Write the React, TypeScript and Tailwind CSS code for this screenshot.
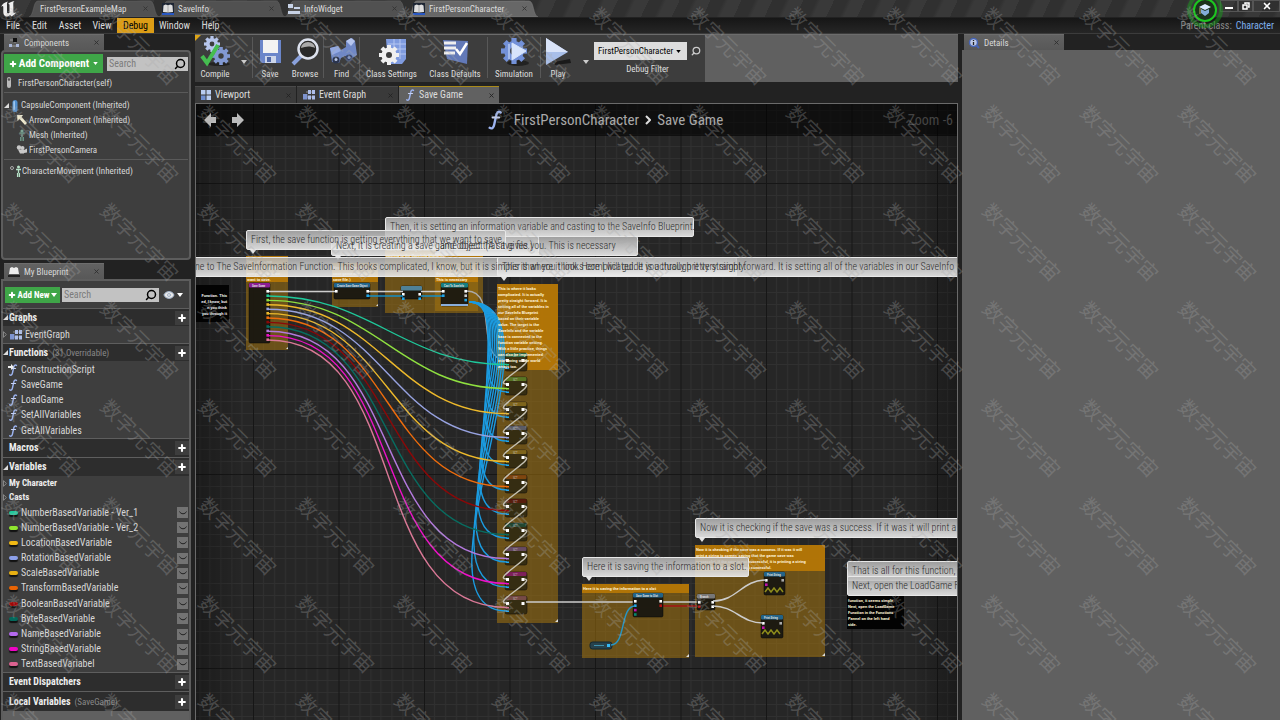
import type { ReactNode } from 'react';
import { Eye, Plus, Search, X } from 'lucide-react';

const watermarks = Array.from({ length: 104 }, (_, i) => i);

const variables = [
  { name: 'NumberBasedVariable - Ver_1', dot: 'bg-[#1fc99b]', color: '#1fc99b' },
  { name: 'NumberBasedVariable - Ver_2', dot: 'bg-[#8fe52f]', color: '#8fe040' },
  { name: 'LocationBasedVariable', dot: 'bg-[#f0b915]', color: '#edb92b' },
  { name: 'RotationBasedVariable', dot: 'bg-[#8c9fe8]', color: '#97a2e0' },
  { name: 'ScaleBasedVariable', dot: 'bg-[#e8b013]', color: '#edb92b' },
  { name: 'TransformBasedVariable', dot: 'bg-[#e86404]', color: '#ee6c0c' },
  { name: 'BooleanBasedVariable', dot: 'bg-[#a00808]', color: '#8b0808' },
  { name: 'ByteBasedVariable', dot: 'bg-[#04695c]', color: '#086c60' },
  { name: 'NameBasedVariable', dot: 'bg-[#b469ee]', color: '#b379dd' },
  { name: 'StringBasedVariable', dot: 'bg-[#ee04c4]', color: '#ee10c8' },
  { name: 'TextBasedVariabel', dot: 'bg-[#dc6290]', color: '#d97896' },
];

const gearTeeth = [0, 45, 90, 135, 180, 225, 270, 315];

function Gear({ cx, cy, r, fill }: { cx: number; cy: number; r: number; fill: string }) {
  return (
    <g transform={`translate(${cx} ${cy})`}>
      {gearTeeth.map((a) => (
        <rect key={a} x={-r * 0.2} y={-r} width={r * 0.4} height={r} fill={fill} transform={`rotate(${a})`} />
      ))}
      <circle r={r * 0.52} fill="none" stroke={fill} strokeWidth={r * 0.48} />
      <circle r={r * 0.3} fill="#3d3d3d" />
    </g>
  );
}

function FunctionIcon({ className }: { className: string }) {
  return (
    <svg viewBox="0 0 10 14" className={className} fill="none" strokeLinecap="round">
      <path d="M9 1.6C7.4.4 6.2 1.8 5.8 4L4.4 10.4C4 12.6 2.8 13.6 1.2 12.6" stroke="#9db4f0" strokeWidth="1.7" />
      <path d="M3.2 5.2H8" stroke="#c7d3f7" strokeWidth="1.3" />
    </svg>
  );
}

function GraphIcon() {
  return (
    <svg viewBox="0 0 12 10" className="h-2.5 w-3 shrink-0">
      <path d="M3 2h6M4 7h5" stroke="#888" />
      <path d="M5 0h3v4H5zM9 0h3v4H9zM5 5.5h3v4H5zM9 5.5h3v4H9z" fill="#aebfea" />
      <path d="M0 4h4.4v5.500H0z" fill="#7e94d0" />
    </svg>
  );
}

function BookIcon() {
  return (
    <svg viewBox="0 0 12 12" className="h-3 w-3 shrink-0">
      <path d="M0 0h12v12H0z" fill="#1d2533" />
      <path d="M0 10h12v2H0z" fill="#2757c4" />
      <path d="M1.500 2.500L3.500 1.500 6 2.300 8.500 1.500 10.500 2.500 11 9 6 9.400 1 9z" fill="#dedede" />
      <path d="M6 2v7.400" stroke="#8b8b8b" strokeWidth=".6" />
    </svg>
  );
}

function Caret({ className }: { className: string }) {
  return (
    <svg viewBox="0 0 6 4" className={className} fill="currentColor">
      <path d="M0 0h6L3 4z" />
    </svg>
  );
}

function OpenCorner() {
  return (
    <svg viewBox="0 0 5 5" className="h-[5px] w-[5px] shrink-0" fill="#ddd">
      <path d="M5 0v5H0z" />
    </svg>
  );
}

function ClosedArrow() {
  return (
    <svg viewBox="0 0 4 7" className="h-[7px] w-1 shrink-0" fill="none" stroke="#999" strokeWidth=".8">
      <path d="M.5.7L3.400 3.500.5 6.300z" />
    </svg>
  );
}

function AssetTab({ label, icon, active, className }: { label: string; icon?: ReactNode; active?: boolean; className: string }) {
  return (
    <div className={`relative flex h-[17px] items-center text-[9px] ${className}`}>
      <svg viewBox="0 0 130 17" preserveAspectRatio="none" className="absolute inset-0 h-full w-full">
        <path d="M0 17C5 16 4 1 9 1H121C126 1 125 16 130 17z" fill={active ? '#676767' : '#515151'} stroke={active ? '#808080' : '#636363'} strokeWidth=".6" />
      </svg>
      <button className="relative flex h-full min-w-0 flex-1 items-center gap-1 whitespace-nowrap text-left">
        {icon}
        {label}
      </button>
      <X className="relative mr-2.5 h-[7px] w-[7px] text-[#333]" strokeWidth={3} />
    </div>
  );
}

function PanelTab({ label, icon, className }: { label: string; icon: ReactNode; className: string }) {
  return (
    <div className={`flex h-4 items-center gap-1 border-t border-[#6d6d6d] bg-gradient-to-b from-[#626262] to-[#585858] pl-1 text-[9px] ${className}`}>
      {icon}
      <span className="flex-1 text-[#d8d8d8]">{label}</span>
      <X className="mr-1 h-[7px] w-[7px] text-[#2e2e2e]" strokeWidth={3} />
    </div>
  );
}

function SearchBox({ id }: { id: string }) {
  return (
    <div className="flex h-3.5 min-w-0 flex-1 items-center bg-[#c2c2c2] px-0.5">
      <label htmlFor={id} className="sr-only">Search</label>
      <input id={id} placeholder="Search" className="min-w-0 flex-1 bg-transparent text-black outline-none placeholder:text-[#7b7b7b]" />
      <Search className="h-3 w-3 -scale-x-100 text-black" strokeWidth={3} />
    </div>
  );
}

function SectionHeader({ label, note, open, className }: { label: string; note?: string; open?: boolean; className: string }) {
  return (
    <div className={`flex items-center border-t border-[#5e5e5e] bg-[#2d2d2d] ${className}`}>
      <span className="flex w-[6px] items-center">{open && <OpenCorner />}</span>
      <span className="font-bold text-[#eee]">{label}</span>
      {note && <span className="ml-1 text-[9px] text-[#888]">{note}</span>}
      <button aria-label={`Add to ${label}`} className="ml-auto flex h-3.5 w-3.5 items-center justify-center bg-[#3d3d3d] text-white">
        <Plus className="h-2.5 w-2.5" strokeWidth={5} />
      </button>
    </div>
  );
}

function ComponentsPanel() {
  return (
    <section className="flex flex-col">
      <PanelTab
        label="Components"
        className="ml-[3px] w-[100px]"
        icon={
          <svg viewBox="0 0 12 10" className="h-2.5 w-3">
            <path d="M2 2h5v3M4 8h6" stroke="#999" fill="none" />
            <path d="M5 0h4v4H5z" fill="#111" /><path d="M1 6h3v3H1zM8 6h3v3H8z" fill="#a9b6d8" />
          </svg>
        }
      />
      <div className="flex h-[210px] flex-col rounded-sm border-2 border-[#5d5d5d] bg-[#3e3e3e] px-px pt-0.5">
        <div className="flex items-center gap-1">
          <button className="flex h-[19px] w-[99px] items-center justify-center gap-0.5 bg-[#3fa648] text-[11px] font-bold whitespace-nowrap text-white">
            <Plus className="h-2 w-2" strokeWidth={6} />
            Add Component
            <Caret className="ml-0.5 h-[3px] w-[5px]" />
          </button>
          <SearchBox id="component-search" />
        </div>
        <ul className="mt-0.5 text-[9px] text-[#d8d8d8]">
          <li className="flex h-[15px] items-center gap-1.5 pl-0.5">
            <svg viewBox="0 0 6 12" className="h-3 w-1.5"><rect x="1" y="0" width="4" height="11" rx="2" fill="#bbb" /><circle cx="3" cy="2.500" r="1.300" fill="#555" /></svg>
            FirstPersonCharacter(self)
          </li>
          <li className="mt-0.5 flex h-5 items-end gap-[3px] border-t border-[#5a5a5a]">
            <span className="flex h-3.5 items-center"><OpenCorner /></span>
            <svg viewBox="0 0 6 12" className="h-3 w-1.5"><rect x=".5" y="0" width="5" height="12" rx="2.500" fill="#4f8fd0" /><rect x="1.400" y="1" width="1.500" height="9" rx=".8" fill="#a7cdf2" /></svg>
            CapsuleComponent (Inherited)
          </li>
          <li className="flex h-[15px] items-center gap-0.5 pl-3">
            <svg viewBox="0 0 11 10" className="h-2.5 w-[11px]"><path d="M1 0h6L5.500 2 11 8 9 10 3.500 4 1.500 6z" fill="#eee9cf" /></svg>
            ArrowComponent (Inherited)
          </li>
          <li className="flex h-[15px] items-center gap-0.5 pl-3">
            <svg viewBox="0 0 11 12" className="h-3 w-[11px]"><circle cx="6" cy="2" r="1.600" fill="#7da594" /><path d="M3.500 4h5M6 4v4M4.800 8v4M7.200 8v4" stroke="#6d9484" strokeWidth="1.500" /></svg>
            Mesh (Inherited)
          </li>
          <li className="flex h-[15px] items-center gap-0.5 pl-3">
            <svg viewBox="0 0 11 10" className="h-2.5 w-[11px]" fill="#c9c9c9"><circle cx="3" cy="2.500" r="2.200" /><circle cx="6.500" cy="3" r="2" /><path d="M2 4.500h6v4H4zM8 5l3-1.500v4L8 8z" /></svg>
            FirstPersonCamera
          </li>
          <li className="mt-0.5 flex h-[22px] items-center border-t border-[#5a5a5a] pl-1.5">
            <svg viewBox="0 0 12 12" className="h-3 w-3"><circle cx="2" cy="3" r="1.500" fill="none" stroke="#aaa" /><circle cx="8.500" cy="2" r="1.500" fill="#b5e0c6" /><path d="M6 4.500h5M8.500 4v4M7.600 8v4M9.400 8v4" stroke="#b5e0c6" strokeWidth="1.300" /></svg>
            CharacterMovement (Inherited)
          </li>
        </ul>
      </div>
    </section>
  );
}

function BlueprintPanel() {
  return (
    <section className="mt-[3px] flex min-h-0 flex-1 flex-col">
      <PanelTab
        label="My Blueprint"
        className="ml-[3px] w-[100px]"
        icon={<svg viewBox="0 0 12 10" className="h-2.5 w-3"><path d="M2 1L4 0 6 1 8 0l2 1 1 6H1z" fill="#eee" /><path d="M0 8h12v2H0z" fill="#222" /></svg>}
      />
      <div className="flex min-h-0 flex-1 flex-col border-2 border-b-0 border-[#5d5d5d] bg-[#606060]">
        <div className="flex h-[27px] items-center gap-0.5 bg-[#3e3e3e] px-0.5">
          <button className="flex h-4 w-[55px] items-center justify-center gap-0.5 bg-[#3fa648] text-[9px] font-bold whitespace-nowrap text-white">
            <Plus className="h-2 w-2" strokeWidth={6} />
            Add New
            <Caret className="h-1 w-1.5" />
          </button>
          <SearchBox id="blueprint-search" />
          <button aria-label="View options" className="ml-0.5 flex items-center gap-0.5 pr-1 text-white">
            <Eye className="h-3 w-3" fill="#e8e8e8" stroke="#9fb0c8" />
            <Caret className="h-1 w-1.5" />
          </button>
        </div>
        <SectionHeader label="Graphs" open className="h-[18px]" />
        <div className="flex h-[17px] items-center gap-[3px] bg-[#3e3e3e] text-[#d8d8d8]"><ClosedArrow /><GraphIcon />EventGraph</div>
        <SectionHeader label="Functions" note="(31 Overridable)" open className="h-[18px]" />
        <ul className="flex h-[77px] flex-col justify-between bg-[#3e3e3e] pt-px text-[#d8d8d8]">
          {['ConstructionScript', 'SaveGame', 'LoadGame', 'SetAllVariables', 'GetAllVariables'].map((name, i) => (
            <li key={name} className="flex h-[15px] items-center gap-[3px] pl-[5px]">
              <span className="relative flex w-2.5 justify-center">
                {i === 0 && <svg viewBox="0 0 6 6" className="absolute top-0 left-0 h-1.5 w-1.5"><path d="M0 2h3V0l3 3-3 3V4H0z" fill="#eee" /></svg>}
                <FunctionIcon className="h-3 w-2.5" />
              </span>
              {name}
            </li>
          ))}
        </ul>
        <SectionHeader label="Macros" className="h-[19px]" />
        <SectionHeader label="Variables" open className="h-[19px]" />
        <div className="flex h-[29px] flex-col bg-[#3e3e3e] text-[9px] font-bold text-[#eee]">
          <span className="flex h-[14px] items-center gap-0.5"><ClosedArrow />My Character</span>
          <span className="flex h-[14px] items-center gap-0.5"><ClosedArrow />Casts</span>
        </div>
        <ul className="flex h-[167px] flex-col justify-between bg-[#3e3e3e] text-[#d8d8d8]">
          {variables.map((v) => (
            <li key={v.name} className="flex h-[15px] items-center pr-px pl-[6px]">
              <span className={`mr-[3px] h-1 w-[9px] rounded-full shadow-[0_2px_1px_#111] ${v.dot}`} />
              {v.name}
              <button aria-label={`Toggle visibility of ${v.name}`} className="ml-auto flex h-[11px] w-[11px] items-center justify-center bg-[#737373]">
                <svg viewBox="0 0 8 4" className="h-1 w-2" fill="none" stroke="#222"><path d="M.5.5C2 3.500 6 3.500 7.500.5" /></svg>
              </button>
            </li>
          ))}
        </ul>
        <SectionHeader label="Event Dispatchers" className="h-[19px]" />
        <SectionHeader label="Local Variables" note="(SaveGame)" className="h-[20px]" />
      </div>
    </section>
  );
}

function ToolButton({ label, width, children }: { label: string; width: string; children: ReactNode }) {
  return (
    <button className={`flex h-full flex-col items-center justify-end whitespace-nowrap text-[9px] text-[#ddd] ${width}`}>
      <svg viewBox="0 0 32 32" className="h-8 w-8">{children}</svg>
      <span className="leading-3">{label}</span>
    </button>
  );
}

function Divider() {
  return <span className="h-[41px] w-px shrink-0 bg-[#585858]" />;
}

function Toolbar() {
  return (
    <div className="flex h-[48px] border-t border-[#6c6c6c] bg-[#606060]">
      <div className="relative flex items-center bg-[#3d3d3d] pb-0.5">
        <svg viewBox="0 0 6 6" className="absolute top-0 left-0 h-1.5 w-1.5"><path d="M0 0h6L0 6z" fill="#dca416" /></svg>
        <ToolButton label="Compile" width="w-[40px]">
          <ellipse cx="20" cy="28" rx="11" ry="2" fill="#222" />
          <Gear cx={13} cy={8} r={8} fill="#b7c6ec" />
          <Gear cx={22} cy={20} r={9} fill="#8299d3" />
          <path d="M3 20l5 7L19 9" fill="none" stroke="#45bd50" strokeWidth="4" />
        </ToolButton>
        <button aria-label="Compile options" className="flex w-[17px] justify-center pt-2 text-[#ccc]"><Caret className="h-1 w-1.5" /></button>
        <Divider />
        <ToolButton label="Save" width="w-[34px]">
          <path d="M6 4h21v23H8l-2-2z" fill="#6b86ca" />
          <path d="M9 4h15v13H9z" fill="#f2f2f2" />
          <path d="M11 20h11v7H11z" fill="#cdd6ea" /><path d="M13 21h4v5h-4z" fill="#5068a8" />
        </ToolButton>
        <ToolButton label="Browse" width="w-[36px]">
          <path d="M13 19L4 28" stroke="#8aa1dc" strokeWidth="4" />
          <circle cx="19" cy="13" r="9.500" fill="#292929" stroke="#dde2ee" strokeWidth="2.500" />
          <path d="M12 12a7 6 0 0 1 14 0c-4-2-9-2-14 0z" fill="#aaa" />
        </ToolButton>
        <Divider />
        <ToolButton label="Find" width="w-[35px]">
          <path d="M4 12l8-2 3 4 5-3 0-6 6-3 3 3 2 14-6 4-6-3-4 2-2 5-7-1z" fill="#7088c6" />
          <path d="M20 5l5-3 4 3-4 5z" fill="#b6c5ee" /><path d="M4 12l8-2 3 5-9 4z" fill="#93a9e2" />
          <circle cx="10" cy="24" r="3.500" fill="#2a344e" /><circle cx="23" cy="22" r="3.500" fill="#34436b" />
          <circle cx="10" cy="23.500" r="1.500" fill="#b9c5e0" /><circle cx="23" cy="21.500" r="1.500" fill="#8496c4" />
        </ToolButton>
        <Divider />
        <ToolButton label="Class Settings" width="w-[63px]">
          <path d="M10 3h20v20l-4 5H12z" fill="#7f9bdf" />
          <path d="M12 8h18M12 13h18M12 18h18M18 3v20M24 3v20" stroke="#b5c6f1" />
          <Gear cx={13} cy={19} r={10} fill="#f0f0f0" />
        </ToolButton>
        <ToolButton label="Class Defaults" width="w-[64px]">
          <path d="M4 4l25 1-1 23L8 23z" fill="#6279b8" />
          <path d="M5 7h12M5 12h12M5 17h11" stroke="#eee" strokeWidth="3" />
          <path d="M17 13l4 5 7-11" stroke="#fff" strokeWidth="2.500" fill="none" />
        </ToolButton>
        <Divider />
        <ToolButton label="Simulation" width="w-[52px]">
          <ellipse cx="20" cy="27" rx="11" ry="3" fill="#222" />
          <Gear cx={16} cy={15} r={13} fill="#7391d8" />
          <path d="M11 8v15M14 7v17l14-9z" fill="#d7e4fb" stroke="#d7e4fb" />
        </ToolButton>
        <Divider />
        <ToolButton label="Play" width="w-[34px]">
          <path d="M12 26l16-3 1 4-16 2z" fill="#1a1a1a" />
          <path d="M4 2l22 14L4 29z" fill="#a9bfe9" /><path d="M4 2l22 14H4z" fill="#d9e3f8" />
        </ToolButton>
        <button aria-label="Play options" className="flex w-[14px] justify-end pt-2 text-[#ccc]"><Caret className="h-1 w-1.5" /></button>
        <div className="ml-[5px] flex flex-col items-center pt-0.5">
          <div className="flex items-center gap-1">
            <div className="relative">
              <select id="debug-filter" className="h-[18px] w-[93px] appearance-none bg-[#ddd] pl-1 text-[9px] text-black">
                <option>FirstPersonCharacter</option>
              </select>
              <Caret className="pointer-events-none absolute top-2 right-1.5 h-[3px] w-[5px] text-black" />
            </div>
            <Search className="h-2.5 w-2.5 -scale-x-100 text-[#ccc]" strokeWidth={3} />
          </div>
          <label htmlFor="debug-filter" className="pt-0.5 text-[9px] text-[#ddd]">Debug Filter</label>
        </div>
        <span className="w-1" />
      </div>
    </div>
  );
}

const setNodes = variables.map((v, i) => ({ color: v.color, top: 353 + Math.round(i * 24.3) }));

const setterComment = [
  'This is where it looks', 'complicated. It is actually', 'pretty straight forward. It is', 'setting all of the variables in',
  'our SaveInfo Blueprint', 'based on their variable', 'value. The target is the', 'SaveInfo and the variable',
  'base is connected to the', 'function variable setting.', 'With a little practice, things', 'can also be implemented',
  'into saving whole world', 'arrays too.',
];

function Wire({ x1, y1, x2, y2, bend, color, width = 1.4 }: { x1: number; y1: number; x2: number; y2: number; bend: number; color: string; width?: number }) {
  return <path d={`M${x1} ${y1}C${x1 + bend} ${y1} ${x2 - bend} ${y2} ${x2} ${y2}`} fill="none" stroke={color} strokeWidth={width} />;
}

function NoteLines({ x, y, lines }: { x: number; y: number; lines: string[] }) {
  return (
    <text fontSize="4" fontWeight="700" fontFamily="Roboto, sans-serif" fill="#fff3d8">
      {lines.map((line, i) => <tspan key={line} x={x} y={y + i * 6}>{line}</tspan>)}
    </text>
  );
}

function CommentBox({ x, y, w, h, head, lines, textY }: { x: number; y: number; w: number; h: number; head: number; lines: string[]; textY: number }) {
  return (
    <g>
      <rect x={x} y={y} width={w} height={h} fill="#a4740f" fillOpacity=".55" />
      <rect x={x} y={y} width={w} height={head} fill="#b87805" fillOpacity=".9" />
      <NoteLines x={x + 1} y={textY} lines={lines} />
    </g>
  );
}

function GraphNode({ x, y, w, h, head, title, left = [], right = [] }: { x: number; y: number; w: number; h: number; head: string; title?: string; left?: string[]; right?: string[] }) {
  return (
    <g>
      <rect x={x} y={y} width={w} height={h} rx="1.500" fill="#171610" fillOpacity=".92" stroke="#080808" strokeWidth=".5" />
      <rect x={x} y={y} width={w} height="4.500" rx="1" fill={head} />
      {title && <text x={x + 3} y={y + 4} fontSize="3" fontWeight="700" fill="#ddd">{title}</text>}
      {left.map((c, i) => <rect key={i} x={x + 1} y={y + 7 + i * 4.4} width="2.600" height="2.600" fill={c} />)}
      {right.map((c, i) => <rect key={i} x={x + w - 3.6} y={y + 7 + i * 4.4} width="2.600" height="2.600" fill={c} />)}
    </g>
  );
}

function Graph() {
  return (
    <svg width="762" height="616" viewBox="196 104 762 616" className="absolute top-0 left-0">
      <defs>
        <pattern id="grid" x="253" y="183" width="85.500" height="97" patternUnits="userSpaceOnUse">
          <rect width="86" height="97" fill="#262626" />
          <path d="M10.500 0v97M21.500 0v97M32.500 0v97M42.500 0v97M53.500 0v97M64.500 0v97M74.500 0v97M0 12.500h86M0 24.500h86M0 36.500h86M0 48.500h86M0 60.500h86M0 72.500h86M0 84.500h86" stroke="#303030" />
          <path d="M.5 0v97M0 .5h86" stroke="#161616" />
        </pattern>
        <linearGradient id="vignette" x1="0" y1="0" x2="1" y2="0">
          <stop offset="0" stopColor="#000" stopOpacity=".3" /><stop offset=".06" stopColor="#000" stopOpacity="0" />
          <stop offset=".94" stopColor="#000" stopOpacity="0" /><stop offset="1" stopColor="#000" stopOpacity=".3" />
        </linearGradient>
      </defs>
      <rect x="196" y="104" width="762" height="616" fill="url(#grid)" />
      <rect x="196" y="104" width="762" height="616" fill="url(#vignette)" />

      <rect x="196" y="285" width="33" height="37" fill="#030303" />
      {['Function. This', 'ed, I know, but', 'n you think', 'you through it'].map((t, i) => (
        <text key={t} x="227" y={297 + i * 6} textAnchor="end" fontSize="4" fontWeight="700" fontFamily="Roboto, sans-serif" fill="#eee">{t}</text>
      ))}
      <rect x="847" y="592" width="57" height="37" fill="#030303" />
      <NoteLines x={848} y={602} lines={['function, it seems simple', 'Next, open the LoadGame', 'Function in the Functions', 'Pannel on the left hand', 'side.']} />

      <CommentBox x={246} y={256} w={42} h={94} head={26} textY={263} lines={['First, the save', 'function is getting', 'everything that we', 'want to save.']} />
      <CommentBox x={332} y={263} w={46} h={44} head={19} textY={269} lines={['Next, it is creating a', 'save game object (A', 'save file.)']} />
      <CommentBox x={385} y={246} w={98} h={67} head={12} textY={251} lines={['Then, it is setting an information', 'casting to the SaveInfo Blueprint.']} />
      <CommentBox x={435} y={263} w={43} h={48} head={19} textY={269} lines={['object that', 'that it gives you.', 'This is necessary']} />
      <CommentBox x={497} y={284} w={61} h={339} head={86} textY={290} lines={[]} />
      <CommentBox x={582} y={584} w={107} h={74} head={9} textY={590} lines={['Here it is saving the information to a slot']} />
      <CommentBox
        x={695} y={545} w={130} h={112} head={26} textY={551}
        lines={['Now it is checking if the save was a success. If it was it will', 'print a string to screen, saying that the game save was', 'successful. If the save is not successful, it is printing a string', 'saying the game save was not successful.']}
      />
      <path d="M555 622l3-3v3zM686 657l3-3v3zM822 656l3-3v3zM286 349l2-2v2zM376 306l2-2v2z" fill="#ddd" />

      <GraphNode x={249} y={283} w={21} h={60} head="#8b1d96" title="Save Game" right={['#fff', ...variables.map((v) => v.color)]} />
      <GraphNode x={334} y={283} w={36} h={16} head="#20638c" title="Create Save Game Object" left={['#fff']} right={['#fff', '#20a4e8']} />
      <GraphNode x={401} y={286} w={21} h={13} head="#4f8197" left={['#fff', '#20a4e8']} right={['#fff', '#20a4e8']} />
      <GraphNode x={441} y={283} w={27} h={23} head="#157e82" title="Cast To SaveInfo" left={['#fff', '#20a4e8']} right={['#fff', '#ccc', '#20a4e8']} />
      <rect x="441" y="304" width="27" height="2" fill="#89aedb" />
      {setNodes.map((n, i) => (
        <g key={i}>
          <rect x="505" y={n.top} width="22" height="18" rx="2" fill="#332b12" fillOpacity=".95" stroke="#15120a" strokeWidth=".6" />
          <rect x="505.500" y={n.top} width="21" height="4" rx="1" fill={n.color} fillOpacity=".4" />
          <text x="513" y={n.top + 4} fontSize="3" fill="#ddd">SET</text>
          <path d={`M506 ${n.top + 6}h3v3h-3zM521.500 ${n.top + 6}h3v3h-3z`} fill="#fff" />
          <path d={`M506 ${n.top + 11}h3v1.500h-3z`} fill={n.color} />
          <path d={`M506 ${n.top + 14.5}h3v1.500h-3z`} fill="#25a9ee" />
        </g>
      ))}

      <path d="M269 291.500h66M369 291.500h34M421 291.500h21M526 602h108M662 602h38" stroke="#ccc" strokeWidth="1.500" />
      <path d="M369 296h34M421 296h21" stroke="#168fc4" strokeWidth="1.300" />
      <path d="M662 606h38" stroke="#a51414" strokeWidth="1.500" />
      <Wire x1={467} y1={291} x2={506} y2={360} bend={32} color="#aaa" />
      {setNodes.map((n, i) => (
        <Wire key={i} x1={469} y1={302} x2={507} y2={n.top + 15} bend={34 + i * 7} color="#1b9be0" />
      ))}
      {setNodes.map((n, i) => (
        <Wire key={i} x1={268} y1={296 + i * 4.4} x2={507} y2={n.top + 11.5} bend={104 + i * 4} color={n.color} />
      ))}
      {setNodes.slice(0, -1).map((n, i) => (
        <Wire key={i} x1={524} y1={n.top + 7} x2={506} y2={setNodes[i + 1].top + 7} bend={14} color="#c4c0b2" />
      ))}
      <NoteLines x={498} y={290} lines={setterComment} />

      <GraphNode x={633} y={593} w={30} h={24} head="#236387" title="Save Game to Slot" left={['#fff', '#25a9ee', '#c012aa', '#07876c']} right={['#fff', '#b01414']} />
      <GraphNode x={697} y={594} w={18} h={16} head="#777" title="Branch" left={['#fff', '#b01414']} right={['#fff', '#fff']} />
      <GraphNode x={764} y={572} w={21} h={23} head="#236387" title="Print String" left={['#fff', '#c012aa']} right={['#aaa']} />
      <GraphNode x={761} y={615} w={22} h={23} head="#236387" title="Print String" left={['#fff', '#c012aa']} right={['#aaa']} />
      <path d="M765 592l3-4 3 4 3-4 3 4 3-4 3 4M762 634l3-4 3 4 3-4 3 4 3-4 3 4" fill="none" stroke="#8f8d1c" strokeWidth="1.500" />
      <rect x="590" y="642" width="22" height="7" rx="2.500" fill="#28424c" stroke="#13262e" />
      <path d="M594 645.500h10" stroke="#3e91ad" />
      <rect x="607" y="644" width="3" height="3" fill="#35b9f5" />
      <Wire x1={611} y1={645} x2={635} y2={606} bend={15} color="#2795c4" />
      <Wire x1={713} y1={601} x2={766} y2={580} bend={24} color="#ccc" width={1.5} />
      <Wire x1={713} y1={606} x2={763} y2={623} bend={22} color="#ccc" width={1.5} />
    </svg>
  );
}

function Bubble({ className, tail, children }: { className: string; tail?: boolean; children: string }) {
  return (
    <div className={`absolute h-5 ${className}`}>
      <span className="absolute inset-0 rounded-xs border border-[#e8e8e8] bg-gradient-to-b from-[#b4b4b4]/85 to-[#ececec]/90" />
      {tail && <svg viewBox="0 0 6 4" className="absolute top-full left-1 h-1 w-1.5"><path d="M0 0h6L3 4z" fill="#e4e4e4" /></svg>}
      <span className="relative z-10 block pl-[5px] text-[10px] leading-5 whitespace-nowrap text-[#2c2c2c]">{children}</span>
    </div>
  );
}

function Canvas() {
  return (
    <div className="relative isolate min-h-0 flex-1 overflow-hidden border-x border-t border-[#6a6a6a] bg-[#262626] font-light">
      <Graph />
      <Bubble className="top-[113px] left-[189px] w-[309px]">Then, it is setting an information variable and casting to the SaveInfo Blueprint.</Bubble>
      <Bubble className="top-[132px] left-[239px] w-[203px]">and object that it gives you. This is necessary</Bubble>
      <Bubble tail className="top-[132px] left-[135px] w-[208px]">Next, it is creating a save game object (A save file.)</Bubble>
      <Bubble tail className="top-[126px] left-[50px] w-[260px]">First, the save function is getting everything that we want to save.</Bubble>
      <Bubble className="top-[153px] -left-[6px] w-[547px]">ne to The SaveInformation Function. This looks complicated, I know, but it is simpler than you think. Here I will guide you through it very simply.</Bubble>
      <Bubble tail className="top-[153px] left-[301px] w-[500px]">This is where it looks complicated. It is actually pretty straight forward. It is setting all of the variables in our SaveInfo Blueprint</Bubble>
      <Bubble tail className="top-[414px] left-[499px] w-[300px]">Now it is checking if the save was a success. If it was it will print a string</Bubble>
      <Bubble tail className="top-[453px] left-[386px] w-[167px]">Here it is saving the information to a slot.</Bubble>
      <Bubble className="top-[457px] left-[651px] w-[140px]">That is all for this function, it seems</Bubble>
      <Bubble className="top-[472px] left-[651px] w-[140px]">Next, open the LoadGame Function</Bubble>

      <div className="absolute inset-x-0 top-0 flex h-8 items-center bg-black/60 pr-1 pl-2 font-normal">
        <div className="flex flex-1 gap-4">
          <button aria-label="Back"><svg viewBox="0 0 12 14" className="h-3.5 w-3" fill="#bbb"><path d="M0 7l7-7v4h5v6H7v4z" /></svg></button>
          <button aria-label="Forward"><svg viewBox="0 0 12 14" className="h-3.5 w-3" fill="#bbb"><path d="M12 7L5 0v4H0v6h5v4z" /></svg></button>
        </div>
        <nav className="flex items-center gap-1 pl-[54px] text-[15px] text-[#a9a9a9]">
          <FunctionIcon className="mr-2 h-5 w-3.5" />
          <a href="#character">FirstPersonCharacter</a>
          <svg viewBox="0 0 6 10" className="mx-0.5 h-2.5 w-1.5" fill="none" stroke="#ddd" strokeWidth="2"><path d="M1 1l4 4-4 4" /></svg>
          <a href="#save-game">Save Game</a>
        </nav>
        <span className="flex-1 text-right text-[14px] text-[#444]">Zoom -6</span>
      </div>
    </div>
  );
}

function DocTab({ label, icon, active, width }: { label: string; icon: ReactNode; active?: boolean; width: string }) {
  return (
    <div className={`flex h-[17px] items-center border-t ${width} ${active ? 'border-[#a98a1a] bg-[#616161]' : 'border-[#4a4a4a] bg-[#3a3a3a]'}`}>
      <button className="flex flex-1 items-center gap-1 pl-1.5 text-[#ddd]">{icon}{label}</button>
      <X className="mr-1 h-[7px] w-[7px] text-[#222]" strokeWidth={3} />
    </div>
  );
}

export default function App() {
  return (
    <div className="relative flex h-screen flex-col overflow-hidden bg-[#222] font-['Roboto_Condensed','Liberation_Sans_Narrow',Roboto,sans-serif] text-[10px] leading-[14px] text-[#ddd]">
      <header className="shrink-0">
        <div className="flex h-[18px] items-end border-b border-[#222] bg-[repeating-linear-gradient(115deg,#303030_0px,#303030_12px,#393939_16px,#393939_28px)]">
          <svg viewBox="0 0 16 16" className="mr-3 ml-px h-4 w-4 shrink-0 self-center" fill="#eee">
            <path d="M0 6C1 3 4 1 7 .5 5.800 1.500 6 3 6 5v6c0 1.500 1.500 1.500 2.500.7V4c0-1-.8-1.300-1.500-.8C8 1.500 10.500.8 13.500 0 12.200 1 12.300 2 12.300 3.500V11c0 1.200 1 1.300 2.700.6-1 1.600-2.700 2.900-4.300 3.900L9 14c-1 1-2.500 1.500-4 1.500C3 14.500 2.300 13 2.300 11V6C2.300 4.500 1 5 0 6z" />
          </svg>
          <AssetTab label="FirstPersonExampleMap" className="w-[130px] pl-[11px]" />
          <AssetTab label="SaveInfo" icon={<BookIcon />} className="w-[126px] pl-[3px]" />
          <AssetTab label="InfoWidget" icon={<svg viewBox="0 0 12 12" className="h-3 w-3"><path d="M0 1h5v4H0zM6 4h6v2H6zM0 8h12v3H0z" fill="#c7d2e6" /></svg>} className="w-[123px] pl-[3px]" />
          <AssetTab label="FirstPersonCharacter" icon={<BookIcon />} active className="w-[130px] pl-[5px]" />
          <div className="ml-auto flex h-3 self-start text-white">
            <button aria-label="Minimize" className="flex w-[18px] items-center justify-center border border-[#555]"><svg viewBox="0 0 8 8" className="h-2 w-2"><path d="M0 6h8" stroke="#fff" strokeWidth="2" /></svg></button>
            <button aria-label="Restore" className="flex w-[15px] items-center justify-center border border-[#555]"><svg viewBox="0 0 8 8" className="h-2 w-2" fill="none" stroke="#fff" strokeWidth="1.500"><path d="M3 2V1h4v4H6M1 3h4v4H1z" /></svg></button>
            <button aria-label="Close" className="flex w-[27px] items-center justify-center border border-[#555]"><X className="h-2.5 w-2.5" strokeWidth={4} /></button>
          </div>
        </div>
        <div className="flex h-[15px] items-center justify-between bg-gradient-to-b from-[#161616] to-[#262626]">
          <nav className="flex h-full items-center">
            {[['File', 'w-[26px]'], ['Edit', 'w-[27px]'], ['Asset', 'w-[34px]'], ['View', 'w-[30px]'], ['Debug', 'w-[37px] h-full bg-[#dc9d16] text-black'], ['Window', 'w-[41px]'], ['Help', 'w-[31px]']].map(([name, cls]) => (
              <button key={name} className={`text-center ${cls}`}>{name}</button>
            ))}
          </nav>
          <span className="flex gap-1 pr-[6px] text-[#888]">Parent class: <a href="#parent" className="text-[#7fb0ec]">Character</a></span>
        </div>
      </header>

      <main className="flex min-h-0 flex-1 gap-1 border-t border-[#3c3c3c]">
        <aside className="flex w-[191px] shrink-0 flex-col pl-px"><ComponentsPanel /><BlueprintPanel /></aside>
        <div className="flex min-w-0 flex-1 flex-col">
          <Toolbar />
          <div className="mt-[4px] flex gap-px">
            <DocTab label="Viewport" width="w-[101px]" icon={<svg viewBox="0 0 10 10" className="h-2.5 w-2.5"><path d="M0 0h4.500v4.500H0zM5.500 0H10v4.500H5.500zM5.500 5.500H10V10H5.500z" fill="#b9cdf0" /><path d="M0 5.500h4.500V10H0z" fill="#6f8fd0" /></svg>} />
            <DocTab label="Event Graph" width="w-[101px]" icon={<GraphIcon />} />
            <DocTab label="Save Game" active width="w-[100px]" icon={<FunctionIcon className="h-3 w-2.5" />} />
          </div>
          <Canvas />
        </div>
        <aside className="flex w-[318px] shrink-0 flex-col">
          <PanelTab label="Details" className="ml-[2px] w-[100px]" icon={<svg viewBox="0 0 12 12" className="h-3 w-3"><path d="M8 8l3 3" stroke="#4563b5" strokeWidth="2" /><circle cx="5.500" cy="5.500" r="4" fill="#bcc8e6" stroke="#4563b5" strokeWidth="1.500" /><path d="M5.500 3v1M5.500 5v3" stroke="#222" strokeWidth="1.300" /></svg>} />
          <div className="flex-1 bg-[#606060]" />
        </aside>
      </main>

      <svg viewBox="0 0 40 40" className="pointer-events-none absolute -top-2.5 right-[55px] h-10 w-10">
        <circle cx="20" cy="20" r="16" fill="none" stroke="#189a1c" strokeOpacity=".5" strokeWidth="4" />
        <circle cx="20" cy="20" r="11" fill="#1b331c" stroke="#1cc720" strokeWidth="2" />
        <path d="M14 17l6-3 6 3-6 3z" fill="#d9ecff" /><path d="M16 19l4 2 4-2v4l-4 3-4-3z" fill="#82acd8" /><path d="M15 18v6" stroke="#c7a45f" />
      </svg>

      <div aria-hidden="true" className="pointer-events-none absolute top-0 left-0 grid w-[1274px] grid-cols-[repeat(13,98px)] auto-rows-[98px] font-['Noto_Sans_CJK_SC',sans-serif] text-[20px] leading-5 text-[#aaa]/30">
        {watermarks.map((i) => (
          <span key={i} className="flex h-[92px] w-[84px] items-center justify-center whitespace-nowrap"><span className="rotate-45">数字元宇宙</span></span>
        ))}
      </div>
    </div>
  );
}
